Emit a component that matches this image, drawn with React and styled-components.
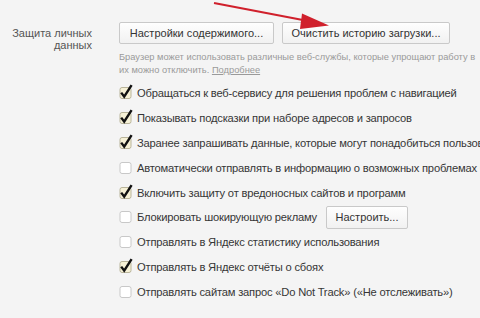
import styled, { createGlobalStyle } from "styled-components";

const Global = createGlobalStyle`
  html, body {
    margin: 0;
    padding: 0;
    background: #f4f4f4;
  }
  body {
    width: 480px;
    height: 318px;
    overflow: hidden;
    font-family: "Liberation Sans", Arial, sans-serif;
  }
`;

const Page = styled.div`
  position: relative;
  width: 480px;
  height: 318px;
  overflow: hidden;
  display: grid;
  grid-template-columns: 92px 1fr;
  column-gap: 27px;
  padding-top: 22px;
  box-sizing: border-box;
`;

const Label = styled.div`
  text-align: right;
  font-size: 11px;
  line-height: 12px;
  color: #555;
  padding-top: 5px;
  white-space: nowrap;
`;

const Content = styled.div`
  display: flex;
  flex-direction: column;
  min-width: 0;
`;

const Buttons = styled.div`
  display: flex;
  gap: 8px;
`;

const Button = styled.button`
  height: ${(p) => p.$h || 22}px;
  width: ${(p) => p.$w}px;
  padding: 0;
  border: 1px solid #c9c9c9;
  border-radius: 2px;
  background: linear-gradient(#fefefe, #f1f1f1);
  color: #333;
  font-family: inherit;
  font-size: 11px;
  white-space: nowrap;
  flex: none;
`;

const Hint = styled.div`
  margin-top: 7px;
  font-size: 9.3px;
  line-height: 13px;
  color: #9a9a9a;
  white-space: nowrap;

  a {
    color: #9a9a9a;
    text-decoration: underline;
  }
`;

const Options = styled.div`
  margin-top: 4px;
  display: flex;
  flex-direction: column;
`;

const Row = styled.div`
  height: 24.8px;
  display: flex;
  align-items: center;
  gap: 4px;
  white-space: nowrap;
  font-size: 11.2px;
  letter-spacing: -0.2px;
  color: #363636;
`;

const Box = styled.svg`
  flex: none;
  width: 14px;
  height: 16px;
  margin-top: -2px;
  overflow: visible;
`;

const Arrow = styled.svg`
  position: absolute;
  left: 0;
  top: 0;
  pointer-events: none;
`;

const Check = ({ on }) => (
  <Box viewBox="0 0 14 16">
    <rect
      x="1"
      y="3.5"
      width="11"
      height="11"
      rx="2"
      fill={on ? "#f6f1d6" : "#fff"}
      stroke={on ? "#b9b49a" : "#c8c8c8"}
    />
    {on && (
      <path
        d="M2.2 8.6 L5.2 12.6 L12.6 1.2"
        fill="none"
        stroke="#111"
        strokeWidth="2.4"
        strokeLinejoin="miter"
      />
    )}
  </Box>
);

const options = [
  [true, "Обращаться к веб-сервису для решения проблем с навигацией"],
  [true, "Показывать подсказки при наборе адресов и запросов"],
  [true, "Заранее запрашивать данные, которые могут понадобиться пользователю"],
  [false, "Автоматически отправлять в информацию о возможных проблемах безопасности"],
  [true, "Включить защиту от вредоносных сайтов и программ"],
  [false, "Блокировать шокирующую рекламу", true],
  [false, "Отправлять в Яндекс статистику использования"],
  [true, "Отправлять в Яндекс отчёты о сбоях"],
  [false, "Отправлять сайтам запрос «Do Not Track» («Не отслеживать»)"],
];

export default function App() {
  return (
    <>
      <Global />
      <Page>
        <Label>
          Защита личных
          <br />
          данных
        </Label>
        <Content>
          <Buttons>
            <Button $w={155}>Настройки содержимого...</Button>
            <Button $w={168}>Очистить историю загрузки...</Button>
          </Buttons>
          <Hint>
            Браузер может использовать различные веб-службы, которые упрощают работу в
            <br />
            их можно отключить. <a>Подробнее</a>
          </Hint>
          <Options>
            {options.map(([on, text, extra]) => (
              <Row key={text}>
                <Check on={on} />
                <span>{text}</span>
                {extra && (
                  <Button $w={82} $h={23} style={{ marginLeft: 5 }}>
                    Настроить...
                  </Button>
                )}
              </Row>
            ))}
          </Options>
        </Content>
        <Arrow width="480" height="40" viewBox="0 0 480 40">
          <line x1="214" y1="3" x2="308" y2="21" stroke="#d0202c" strokeWidth="2.2" />
          <polygon points="329,25.5 302,13.5 300,29" fill="#d0202c" />
        </Arrow>
      </Page>
    </>
  );
}
